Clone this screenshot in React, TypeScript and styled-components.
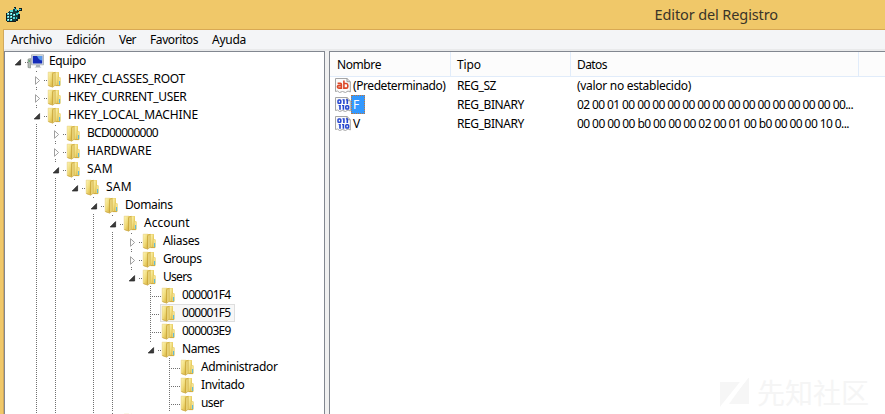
import React, { useLayoutEffect, useRef, useState } from 'react';
import styled, { createGlobalStyle, css } from 'styled-components';

const GlobalStyle = createGlobalStyle`
  *, *::before, *::after { box-sizing: border-box; }
  html, body { margin: 0; padding: 0; overflow: hidden; }
  body { font-family: "Noto Sans", "Open Sans", sans-serif; font-size: 12px; color: #000; }
`;

const Window = styled.div`
  position: relative;
  width: 885px;
  height: 414px;
  display: flex;
  flex-direction: column;
  padding-left: 3px;
  background: #f0c869;
  overflow: hidden;
`;

const TitleBar = styled.header`
  display: flex;
  align-items: center;
  flex: 0 0 29px;
  padding: 0 107px 0 3px;
`;

const Title = styled.h1`
  margin: 0 0 0 auto;
  padding-bottom: 1px;
  font-size: 14.5px;
  font-weight: 400;
  line-height: 28px;
  color: #3a3428;
`;

const Frame = styled.div`
  display: flex;
  flex-direction: column;
  flex: 1;
  min-height: 0;
  border-top: 1px solid #d8a954;
  border-left: 1px solid #d2a95c;
  background: #f0f0f0;
`;

const MenuBar = styled.nav`
  display: flex;
  align-items: center;
  gap: 14px;
  flex: 0 0 20px;
  padding-left: 7px;
  background: #f4f5f7;
  border-bottom: 2px solid #e9eaeb;
`;

const MenuItem = styled.span`
  line-height: 18px;
  padding-top: 1px;
`;

const Panes = styled.main`
  display: flex;
  gap: 4px;
  flex: 1;
  min-height: 0;
`;

const pane = css`
  background: #fff;
  border-top: 1px solid #828790;
  border-left: 1px solid #828790;
  overflow: hidden;
`;

const TreePane = styled.section`
  ${pane}
  flex: 0 0 321px;
  border-right: 1px solid #828790;
  padding: 0 0 0 3px;
`;

const ListPane = styled.section`
  ${pane}
  flex: 1;
`;

const TreeRow = styled.div`
  display: flex;
  align-items: center;
  height: 18px;
`;

const GuideSvg = styled.svg`
  display: block;
  flex: 0 0 19px;
  overflow: visible;
`;

const NodeLabel = styled.div<{ $selected?: boolean }>`
  display: flex;
  align-items: center;
  height: 18px;
  padding-right: 4px;
  ${p => p.$selected && css`
    background: #f7f7f7;
    box-shadow: inset 0 0 0 1px #dedede;
  `}
`;

const NodeIcon = styled.svg`
  display: block;
  flex: 0 0 18px;
  margin-right: 4px;
`;

const Text = styled.span`
  display: inline-block;
  white-space: pre;
  line-height: 18px;
`;

/** Text tracked so that it takes up an exact advance width. */
function Fitted({ width, children }: { width: number; children: string }) {
  const ref = useRef<HTMLSpanElement>(null);
  const [spacing, setSpacing] = useState(0);
  useLayoutEffect(() => {
    if (ref.current && children.length) {
      const natural = ref.current.getBoundingClientRect().width;
      setSpacing((width - natural) / children.length);
    }
  }, []);
  return <Text ref={ref} style={{ letterSpacing: spacing }}>{children}</Text>;
}

type GuideKind = 'empty' | 'line' | 'open' | 'closed' | 'leaf' | 'root';

function Guide({ kind }: { kind: GuideKind }) {
  return (
    <GuideSvg width="19" height="18" viewBox="0 0 19 18" fill="none" shapeRendering="crispEdges">
      {(kind === 'line' || kind === 'leaf') && <path d="M9.5 0V18" stroke="#707070" strokeDasharray="1 1" />}
      {kind === 'leaf' && <path d="M11 10.5H21" stroke="#707070" strokeDasharray="1 1" />}
      {(kind === 'open' || kind === 'closed' || kind === 'root') && (
        <path d="M17 10.5H21" stroke="#707070" strokeDasharray="1 1" />
      )}
      {(kind === 'open' || kind === 'closed') && <path d="M9.5 1V2" stroke="#707070" />}
      {kind === 'closed' && <path d="M9.5 17V18" stroke="#707070" />}
      {(kind === 'open' || kind === 'root') && (
        <path d="M12.6 7.6V13H7.2Z" fill="#3b3b3b" stroke="#222" strokeWidth=".7" shapeRendering="auto" />
      )}
      {kind === 'closed' && (
        <path d="M8.5 6.7V14.3L12.6 10.5Z" fill="#fff" stroke="#a0a0a0" shapeRendering="auto" />
      )}
    </GuideSvg>
  );
}

function Folder() {
  return (
    <NodeIcon width="18" height="18" viewBox="0 0 18 18">
      <defs>
        <linearGradient id="folderFront" x1="0" y1="0" x2="1" y2="1">
          <stop offset="0" stopColor="#fdf5b6" />
          <stop offset=".5" stopColor="#f0dc7c" />
          <stop offset="1" stopColor="#d6ae35" />
        </linearGradient>
        <linearGradient id="folderSide" x1="0" y1="0" x2="1" y2="0">
          <stop offset="0" stopColor="#c9a236" />
          <stop offset=".5" stopColor="#f8eb9c" />
          <stop offset="1" stopColor="#d2ac3f" />
        </linearGradient>
      </defs>
      <path d="M6 2H12.4Q13 2 13 2.6V7L14.6 7.8V15.5H6Z" fill="#e6c95c" />
      <path d="M2.2 2.2H7V16.2L2.2 15.5Z" fill="url(#folderFront)" stroke="#e0c562" strokeWidth=".5" />
      <path d="M6.6 3.6L9.3 2.2V15.2L6.6 17.2Z" fill="url(#folderSide)" stroke="#c39f34" strokeWidth=".5" />
      <path d="M9.6 2.4H12.5V15.4H9.6Z" fill="url(#folderFront)" />
      <path d="M12.5 7.6H14.6V15.4H12.5Z" fill="#f2e294" />
      <path d="M13.6 11V15" stroke="#55b5dc" />
      <path d="M2.5 15.6L6.6 17M9.4 15.6H14" stroke="#cba433" strokeWidth=".9" />
    </NodeIcon>
  );
}

function Computer() {
  return (
    <NodeIcon width="18" height="18" viewBox="0 0 18 18">
      <path d="M1 7.2L3.5 6.5V16L1 15.5Z" fill="#b4bbb7" stroke="#77817b" strokeWidth=".6" />
      <path d="M2.2 8V10" stroke="#4da35d" />
      <path d="M4.5 2.8H16.5V12.8H4.5Z" fill="#dce1e5" stroke="#98a0a8" strokeWidth=".7" />
      <path d="M5.8 4H15.2V11.5H5.8Z" fill="#142bb8" />
      <path d="M10 4H15.2V8.5Q12 8.5 10 4Z" fill="#5797ec" />
      <path d="M9 13H13V14.4L14.5 15.6H7.5L9 14.4Z" fill="#aab2b9" />
    </NodeIcon>
  );
}

function RegeditLogo() {
  return (
    <svg width="17" height="17" viewBox="0 0 17 17" shapeRendering="crispEdges">
      <path d="M1 7L4 4H7L8 2L10 3L11 6L13 5V11L9 15H1Z" fill="#163e42" />
      <path d="M0 7h1v8H0zM1 15h9v1H1zM10 13h2v2h-2zM12 8h2v5h-2zM8 1h2v2H8zM11 4h2v2h-2zM13 2h3v3h-3z" fill="#101b1c" />
      <path d="M1 7h2v2H1zM4 7h2v2H4zM7 8h2v2H7zM1 10h2v2H1zM4 10h2v2H4zM7 11h2v2H7zM1 13h2v2H1zM4 13h2v2H4zM4 4h3v2H4z" fill="#58d6d8" />
      <path d="M2 7h1v1H2zM5 7h1v1H5zM2 10h1v1H2zM5 10h1v1H5zM2 13h1v1H2zM5 13h1v1H5zM8 8h1v1H8z" fill="#e1ffff" />
      <path d="M8 2h1v1H8zM9 3h2v2H9zM10 7h2v2h-2zM12 6h1v2h-1zM13 3h2v1h-2zM12 4h1v1h-1zM10 11h1v2h-1z" fill="#35c4c9" />
    </svg>
  );
}

interface TreeNode { label: string; width: number; guides: string; icon?: 'pc'; selected?: boolean }

const kinds: Record<string, GuideKind> = { ' ': 'empty', '|': 'line', v: 'open', '>': 'closed', '-': 'leaf', r: 'root' };

const nodes: TreeNode[] = [
  { label: 'Equipo', width: 37, guides: 'r', icon: 'pc' },
  { label: 'HKEY_CLASSES_ROOT', width: 117, guides: ' >' },
  { label: 'HKEY_CURRENT_USER', width: 118.5, guides: ' >' },
  { label: 'HKEY_LOCAL_MACHINE', width: 130, guides: ' v' },
  { label: 'BCD00000000', width: 71, guides: ' |>' },
  { label: 'HARDWARE', width: 64.5, guides: ' |>' },
  { label: 'SAM', width: 26, guides: ' |v' },
  { label: 'SAM', width: 26, guides: ' ||v' },
  { label: 'Domains', width: 47.5, guides: ' || v' },
  { label: 'Account', width: 45.5, guides: ' || |v' },
  { label: 'Aliases', width: 36.5, guides: ' || ||>' },
  { label: 'Groups', width: 38.5, guides: ' || ||>' },
  { label: 'Users', width: 28.5, guides: ' || ||v' },
  { label: '000001F4', width: 48.5, guides: ' || || -' },
  { label: '000001F5', width: 48.5, guides: ' || || -', selected: true },
  { label: '000003E9', width: 48.5, guides: ' || || -' },
  { label: 'Names', width: 37.5, guides: ' || || v' },
  { label: 'Administrador', width: 76.5, guides: ' || ||  -' },
  { label: 'Invitado', width: 43.5, guides: ' || ||  -' },
  { label: 'user', width: 22.5, guides: ' || ||  -' },
  { label: '', width: 0, guides: ' || |>' },
];

const HeaderRow = styled.div`
  display: grid;
  grid-template-columns: 121px 120px 288px 1fr;
  height: 25px;
  background: #fcfcfc;
  border-bottom: 1px solid #e1ecfa;
`;

const HeaderCell = styled.div`
  display: flex;
  align-items: center;
  padding: 1px 0 0 6px;
  border-right: 1px solid #e1ecfa;
  &:first-child { padding-left: 7px; }
  &:last-child { border-right: 0; }
`;

const Values = styled.div`
  margin-top: -1px;
`;

const ValueRow = styled.div`
  display: grid;
  grid-template-columns: 121px 120px 288px 1fr;
  height: 19px;
  align-items: center;
`;

const NameCell = styled.div`
  display: flex;
  align-items: center;
  padding-left: 5px;
`;

const ValueIcon = styled.svg`
  display: block;
  flex: 0 0 16px;
`;

const ValueName = styled.div<{ $selected?: boolean }>`
  display: flex;
  align-items: center;
  height: 19px;
  padding: 0 2px 0 2px;
  ${p => p.$selected && css`
    min-width: 14px;
    color: #fff;
    background: #3399ff;
    outline: 1px dotted #bd7740;
    outline-offset: -1px;
  `}
`;

const Cell = styled.div`
  padding-left: 6px;
`;

function ValueGlyph({ binary }: { binary: boolean }) {
  return (
    <ValueIcon width="16" height="17" viewBox="0 0 16 17" fill="none">
      <path d="M.5 1.5H12L15.3 4.7V15L13 14L10.5 15.5L7.5 14.5L4.5 15.5L2.5 14L.5 14.5Z" fill="#fbfbfb" stroke="#a5a5a5" />
      <path d="M12 1.5V4.7H15.3" stroke="#999" />
      {binary ? (
        <>
          <rect x="3" y="4" width="2.8" height="3.2" rx=".8" stroke="#2545cf" strokeWidth="1.5" />
          <rect x="10.8" y="9.8" width="2.8" height="3.2" rx=".8" stroke="#2545cf" strokeWidth="1.5" />
          <path d="M8.9 3.2V8M12.3 3.2V8M5 9V13.8M8.4 9V13.8" stroke="#2545cf" strokeWidth="1.6" />
          <path d="M7.4 3.8H8.6M10.9 3.8H12M3.6 9.6H4.8M7 9.6H8.2" stroke="#2545cf" />
        </>
      ) : (
        <>
          <path d="M2.6 6.4H5.3Q6.4 6.4 6.4 7.5V11.1H3.8Q2.4 11.1 2.4 9.8Q2.4 8.6 3.8 8.6H6.3" stroke="#dc4827" strokeWidth="1.6" />
          <path d="M8.9 3.5V11.1H11.3Q12.8 11.1 12.8 9.4V8.2Q12.8 6.5 11.3 6.5H9" stroke="#dc4827" strokeWidth="1.6" />
        </>
      )}
    </ValueIcon>
  );
}

const values = [
  { name: '(Predeterminado)', nw: 92.5, type: 'REG_SZ', tw: 39, data: '(valor no establecido)', dw: 114, binary: false },
  { name: 'F', nw: 7, type: 'REG_BINARY', tw: 67, data: '02 00 01 00 00 00 00 00 00 00 00 00 00 00 00 00 00 00...', dw: 276, binary: true, selected: true },
  { name: 'V', nw: 8, type: 'REG_BINARY', tw: 67, data: '00 00 00 00 b0 00 00 00 02 00 01 00 b0 00 00 00 10 0...', dw: 272, binary: true },
];

const menus: [string, number][] = [['Archivo', 41], ['Edición', 39], ['Ver', 17], ['Favoritos', 48], ['Ayuda', 34]];

const Watermark = styled.div`
  position: absolute;
  left: 720px;
  top: 374px;
  display: flex;
  align-items: center;
  gap: 8px;
  color: #f5f5f5;
  font: 400 28px/36px "Noto Sans CJK SC", sans-serif;
`;

export default function App() {
  return (
    <Window>
      <GlobalStyle />
      <TitleBar>
        <RegeditLogo />
        <Title><Fitted width={123.5}>Editor del Registro</Fitted></Title>
      </TitleBar>
      <Frame>
        <MenuBar>
          {menus.map(([label, width]) => (
            <MenuItem key={label}><Fitted width={width}>{label}</Fitted></MenuItem>
          ))}
        </MenuBar>
        <Panes>
          <TreePane>
            {nodes.map((node, i) => (
              <TreeRow key={i}>
                {node.guides.split('').map((g, k) => <Guide key={k} kind={kinds[g]} />)}
                <NodeLabel $selected={node.selected}>
                  {node.icon === 'pc' ? <Computer /> : <Folder />}
                  <Fitted width={node.width}>{node.label}</Fitted>
                </NodeLabel>
              </TreeRow>
            ))}
          </TreePane>
          <ListPane>
            <HeaderRow>
              <HeaderCell><Fitted width={44}>Nombre</Fitted></HeaderCell>
              <HeaderCell><Fitted width={24}>Tipo</Fitted></HeaderCell>
              <HeaderCell><Fitted width={30}>Datos</Fitted></HeaderCell>
              <HeaderCell />
            </HeaderRow>
            <Values>
              {values.map(v => (
                <ValueRow key={v.name}>
                  <NameCell>
                    <ValueGlyph binary={v.binary} />
                    <ValueName $selected={v.selected}><Fitted width={v.nw}>{v.name}</Fitted></ValueName>
                  </NameCell>
                  <Cell><Fitted width={v.tw}>{v.type}</Fitted></Cell>
                  <Cell><Fitted width={v.dw}>{v.data}</Fitted></Cell>
                </ValueRow>
              ))}
            </Values>
          </ListPane>
        </Panes>
      </Frame>
      <Watermark>
        <svg width="29" height="36" viewBox="0 0 29 36" fill="#f6f6f6">
          <path d="M0 8H20L0 36ZM29 2V30H9Z" />
          <path d="M29 0L0 36" stroke="#fff" strokeWidth="4" />
        </svg>
        <span>先知社区</span>
      </Watermark>
    </Window>
  );
}
